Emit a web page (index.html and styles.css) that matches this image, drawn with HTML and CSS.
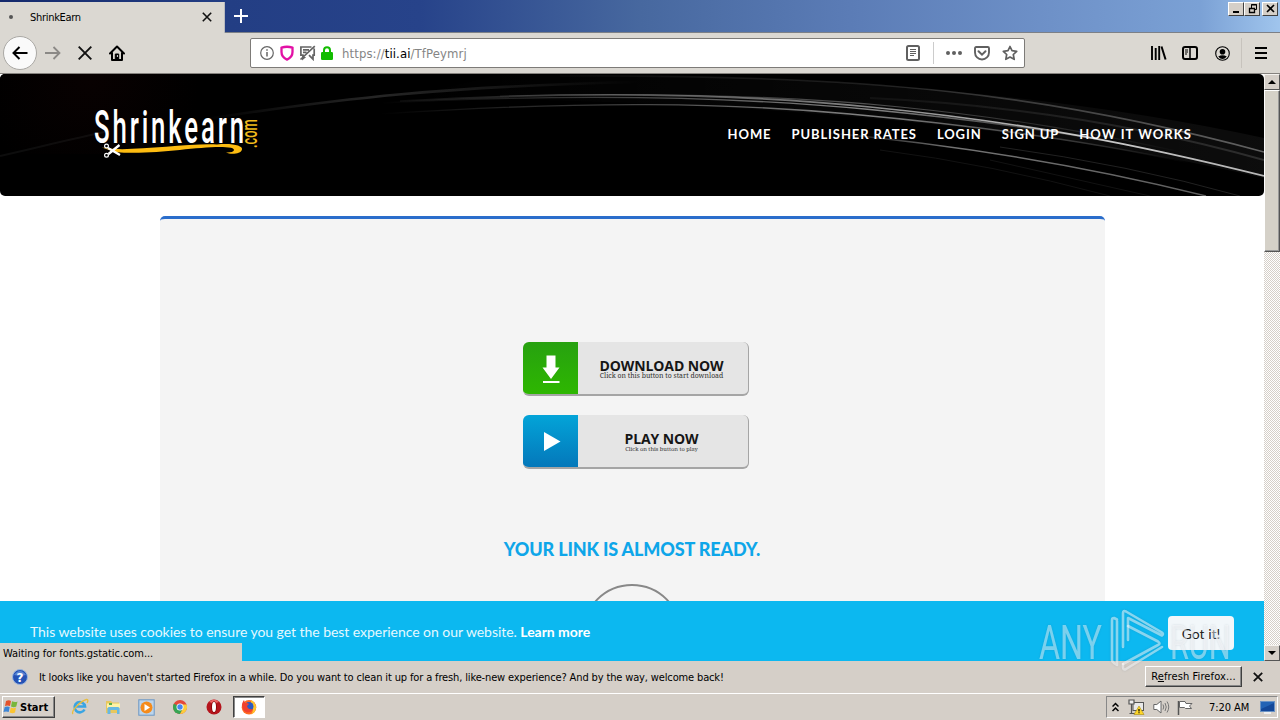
FILE: index.html
```html
<!DOCTYPE html>
<html lang="en">
<head>
<meta charset="utf-8">
<title>ShrinkEarn</title>
<link rel="stylesheet" href="styles.css">
</head>
<body>
<div class="desktop">
  <header class="tabbar">
    <div class="tab">
      <span class="tab-dot"></span>
      <span class="tab-title">ShrinkEarn</span>
      <svg class="tab-close" width="10" height="10" viewBox="0 0 10 10"><path d="M.8.8l8.4 8.4M9.2.8L.8 9.2" stroke="#111" stroke-width="1.6"/></svg>
    </div>
    <svg class="tab-new" width="14" height="14" viewBox="0 0 14 14"><path d="M7 0v14M0 7h14" stroke="#fff" stroke-width="2"/></svg>
    <div class="win-buttons">
      <span class="win-btn"><svg width="16" height="12" viewBox="0 0 16 12"><path d="M4 9h6" stroke="#000" stroke-width="2"/></svg></span>
      <span class="win-btn"><svg width="16" height="12" viewBox="0 0 16 12"><path d="M6.500 5V1.500h5v5H9M6 2h6" fill="none" stroke="#000"/><path d="M4.500 5.500h5v4h-5zM4 5.500h6" fill="none" stroke="#000" stroke-width="1.300"/></svg></span>
      <span class="win-btn win-x"><svg width="16" height="12" viewBox="0 0 16 12"><path d="M4 2l7 7M11 2L4 9" stroke="#000" stroke-width="1.600"/></svg></span>
    </div>
  </header>

  <div class="toolbar">
    <span class="back"><svg width="16" height="14" viewBox="0 0 16 14"><path d="M15.500 7H1.500M7.500 1L1.500 7l6 6" fill="none" stroke="#000" stroke-width="2"/></svg></span>
    <svg class="fwd" width="16" height="14" viewBox="0 0 16 14"><path d="M0 7h14.500M8.500 1l6 6-6 6" fill="none" stroke="#8b8986" stroke-width="1.800"/></svg>
    <svg class="stop" width="14" height="14" viewBox="0 0 14 14"><path d="M.7.7l12.600 12.600M13.300.7L.7 13.300" stroke="#111" stroke-width="1.900"/></svg>
    <svg class="home" width="16" height="16" viewBox="0 0 16 16"><path d="M1 8.500L8 1.500l7 7M3 8v7h10V8" fill="none" stroke="#000" stroke-width="2" stroke-linejoin="round" stroke-linecap="round"/><path d="M6.300 14V9h3.400v5" fill="#000" stroke="#000"/><path d="M8.400 10v2" stroke="#ddd"/></svg>
    <div class="urlbar">
      <svg class="i-info" width="14" height="14" viewBox="0 0 14 14"><circle cx="7" cy="7" r="6.300" fill="none" stroke="#666" stroke-width="1.200"/><path d="M7 6v4.500M7 3.200v1.600" stroke="#666" stroke-width="1.500"/></svg>
      <svg class="i-shield" width="14" height="16" viewBox="0 0 14 16"><path d="M1.500 2.700Q7 .8 12.500 2.700V7c0 3.700-1.800 6-5.500 7.600C3.300 13 1.500 10.700 1.500 7z" fill="none" stroke="#e210a5" stroke-width="2.300"/></svg>
      <svg class="i-chat" width="17" height="16" viewBox="0 0 17 16"><path d="M12.500 2H1.900v8.200h2v3.500l2.500-2.200M15.200 3.500v6.700H14v4l-4-4M4 4.800h6M4 7.300h3.500M1.500 14.500L15.800 1.200" fill="none" stroke="#646464" stroke-width="1.700"/></svg>
      <svg class="i-lock" width="12" height="14" viewBox="0 0 12 14"><path d="M3 7V4.200a3 3 0 0 1 6 0V7" fill="none" stroke="#12bc00" stroke-width="2"/><rect y="6" width="12" height="8" rx="1.200" fill="#12bc00"/></svg>
      <span class="url">https://<b>tii.ai</b>/TfPeymrj</span>
      <svg class="i-reader" width="14" height="16" viewBox="0 0 14 16"><rect x="1" y="1" width="12" height="14" rx="1.500" fill="none" stroke="#606060" stroke-width="2"/><path d="M4 4.500h6M4 6.500h6M4 8.500h6M4 10.500h4" stroke="#606060"/></svg>
      <span class="url-sep"></span>
      <svg class="i-dots" width="16" height="4" viewBox="0 0 16 4"><g fill="#606060"><circle cx="2" cy="2" r="2"/><circle cx="8" cy="2" r="2"/><circle cx="14" cy="2" r="2"/></g></svg>
      <svg class="i-pocket" width="16" height="15" viewBox="0 0 16 15"><path d="M2.200 1h11.600q1.200 0 1.200 1.200V6.500a7 7 0 0 1-14 0V2.200Q1 1 2.200 1z" fill="none" stroke="#606060" stroke-width="1.900"/><path d="M4.500 5.300L8 8.700l3.500-3.400" fill="none" stroke="#606060" stroke-width="2" stroke-linecap="round"/></svg>
      <svg class="i-star" width="16" height="16" viewBox="0 0 16 16"><path d="M8 1.500l2 4.200 4.700.6-3.400 3.200.9 4.800L8 12l-4.200 2.300.9-4.800L1.300 6.300 6 5.700z" fill="none" stroke="#606060" stroke-width="1.700" stroke-linejoin="round"/></svg>
    </div>
    <svg class="i-lib" width="16" height="14" viewBox="0 0 16 14"><path d="M1 0v14M4.700 2v12M8.200 0v14" stroke="#000" stroke-width="1.900"/><path d="M10.500.5L14.600 13.500" stroke="#000" stroke-width="2"/></svg>
    <svg class="i-side" width="16" height="14" viewBox="0 0 16 14"><rect x="1" y="1" width="14" height="12" rx="2" fill="none" stroke="#000" stroke-width="2"/><path d="M8 1v12" stroke="#000" stroke-width="1.500"/><path d="M3 4h3M3 6h3M3 8h2" stroke="#000"/></svg>
    <svg class="i-acct" width="15" height="15" viewBox="0 0 15 15"><circle cx="7.500" cy="7.500" r="6.800" fill="none" stroke="#000" stroke-width="1.100"/><circle cx="7.500" cy="5.800" r="2.800"/><path d="M3.200 10.500q4.300-2.500 8.600 0-4.300 5-8.600 0z"/></svg>
    <span class="menu-sep"></span>
    <svg class="i-menu" width="12" height="12" viewBox="0 0 12 12"><path d="M0 1h12M0 6h12M0 11h12" stroke="#000" stroke-width="1.800"/></svg>
  </div>

  <main class="viewport">
    <div class="page">
      <div class="hero">
        <svg class="hero-bg" width="1264" height="122" viewBox="0 0 1264 122" fill="none">
          <defs>
            <linearGradient id="fade" gradientUnits="userSpaceOnUse" x1="350" y1="0" x2="1264" y2="0"><stop offset="0" stop-color="#fff" stop-opacity="0"/><stop offset=".4" stop-color="#fff" stop-opacity=".35"/><stop offset=".8" stop-color="#fff" stop-opacity=".75"/><stop offset="1" stop-color="#fff" stop-opacity=".7"/></linearGradient>
            <linearGradient id="mid" gradientUnits="userSpaceOnUse" x1="380" y1="0" x2="1190" y2="0"><stop offset="0" stop-color="#fff" stop-opacity="0"/><stop offset=".6" stop-color="#fff" stop-opacity=".5"/><stop offset="1" stop-color="#fff" stop-opacity="0"/></linearGradient>
            <linearGradient id="soft" gradientUnits="userSpaceOnUse" x1="500" y1="0" x2="1264" y2="0"><stop offset="0" stop-color="#fff" stop-opacity="0"/><stop offset=".5" stop-color="#fff" stop-opacity=".12"/><stop offset="1" stop-color="#fff" stop-opacity=".35"/></linearGradient>
            <linearGradient id="haze" gradientUnits="userSpaceOnUse" x1="400" y1="0" x2="1264" y2="0"><stop offset="0" stop-color="#fff" stop-opacity="0"/><stop offset="1" stop-color="#fff" stop-opacity=".05"/></linearGradient>
            <linearGradient id="left" gradientUnits="userSpaceOnUse" x1="200" y1="0" x2="640" y2="0"><stop offset="0" stop-color="#fff" stop-opacity="0"/><stop offset=".4" stop-color="#fff" stop-opacity=".15"/><stop offset="1" stop-color="#fff" stop-opacity="0"/></linearGradient>
            <linearGradient id="low" gradientUnits="userSpaceOnUse" x1="820" y1="0" x2="1264" y2="0"><stop offset="0" stop-color="#fff" stop-opacity="0"/><stop offset=".3" stop-color="#fff" stop-opacity=".45"/><stop offset="1" stop-color="#fff" stop-opacity=".35"/></linearGradient>
            <radialGradient id="warm" gradientUnits="userSpaceOnUse" cx="90" cy="5" r="110"><stop offset="0" stop-color="#080101"/><stop offset="1" stop-color="#000"/></radialGradient>
          </defs>
          <rect width="300" height="80" fill="url(#warm)"/>
          <path d="M0 82C40 73 70 65 110 57" stroke="#fff" stroke-opacity=".05" stroke-width="2"/>
          <path d="M200 46C340 24 450 12 640 8" stroke="url(#left)" stroke-width="2.500"/>
          <path d="M500 1Q950 -4 1264 64V104Q930 26 400 24z" fill="url(#haze)"/>
          <path d="M400 27C600 16 750 21 870 33C1030 49 1140 71 1264 102" stroke="url(#fade)" stroke-width="1.700"/>
          <path d="M380 29C600 18 750 24 870 35.500C1010 49 1100 64 1190 84" stroke="url(#mid)" stroke-width="1.400"/>
          <path d="M380 40C590 26 730 29 850 40C970 51 1080 65 1190 89" stroke="url(#mid)" stroke-width="1.400"/>
          <path d="M500 22C700 17 820 25 900 33C1010 44 1090 58 1190 80" stroke="url(#mid)" stroke-opacity=".6" stroke-width="1.200"/>
          <path d="M560 2C870 0 1050 20 1264 78" stroke="url(#soft)" stroke-width="1.600"/>
          <path d="M870 24Q1080 34 1264 86" stroke="url(#soft)" stroke-opacity=".4" stroke-width="2"/>
          <path d="M820 58C960 71 1090 93 1206 122" stroke="url(#low)" stroke-width="1.400"/>
          <path d="M1000 73Q1130 91 1240 122" stroke="#fff" stroke-opacity=".13"/>
          <path d="M880 76Q990 90 1110 122M990 86L1150 122" stroke="#fff" stroke-opacity=".07"/>
        </svg>
        <svg class="logo" width="170" height="56" viewBox="0 0 170 56">
          <text class="logo-main" transform="translate(1 37) scale(.56 1)" textLength="268" lengthAdjust="spacing">Shrinkearn</text>
          <text class="logo-com" transform="translate(163.500 42) rotate(-90) scale(.6 1)" textLength="48" lengthAdjust="spacingAndGlyphs">.com</text>
          <path d="M6 40.500C26 48 90 37 124 38.500 140 37 150 40 149 43.500 148 48 138 49 133 46.500 142 47 143 43 138 41.800 115 38 62 50 22 46z" fill="#fdbc11"/>
          <g fill="none" stroke="#fff"><circle cx="13.500" cy="40" r="1.900" stroke-width="1.200"/><circle cx="13.500" cy="49.300" r="1.900" stroke-width="1.200"/><path d="M15 42l12 7M15.500 48L26.500 39" stroke-width="2.300"/></g>
        </svg>
        <nav class="nav"><a>HOME</a><a>PUBLISHER RATES</a><a>LOGIN</a><a>SIGN UP</a><a class="nav-how">HOW IT WORKS</a></nav>
      </div>
      <section class="box">
        <div class="ad">
          <span class="ad-icon ad-green"><svg width="54" height="52" viewBox="0 0 54 52"><path d="M23.500 13.500h9v12h4L28 37 19.500 25.500h4zM20 39h16.500v2H20z" fill="#fff"/></svg></span>
          <span class="ad-text"><span class="ad-head">DOWNLOAD NOW</span><span class="ad-sub">Click on this button to start download</span></span>
        </div>
        <div class="ad">
          <span class="ad-icon ad-blue"><svg width="54" height="52" viewBox="0 0 54 52"><path d="M21 17l16.500 9.500L21 36z" fill="#fff"/></svg></span>
          <span class="ad-text"><span class="ad-head ad-head-play">PLAY NOW</span><span class="ad-sub ad-sub-play">Click on this button to play</span></span>
        </div>
        <h1 class="ready">YOUR LINK IS ALMOST READY.</h1>
        <div class="ring"></div>
      </section>
      <div class="cookie">
        <p class="cookie-text">This website uses cookies to ensure you get the best experience on our website. <b>Learn more</b></p>
        <span class="got">Got it!</span>
      </div>
      <div class="status">Waiting for fonts.gstatic.com...</div>
    </div>
    <div class="scroll">
      <span class="sbtn"><svg width="8" height="4" viewBox="0 0 8 4"><path d="M0 4l4-4 4 4z"/></svg></span>
      <span class="thumb"></span>
      <span class="sbtn sbtn-down"><svg width="8" height="4" viewBox="0 0 8 4"><path d="M0 0l4 4 4-4z"/></svg></span>
    </div>
  </main>

  <div class="notice">
    <svg class="q" width="16" height="16" viewBox="0 0 16 16"><circle cx="8" cy="8" r="7.500" fill="#2552b5" stroke="#9bb5dd"/><path d="M2 6Q8-2 14 6 8 7 2 6z" fill="#7da5e4" opacity=".6"/><text x="8" y="12.500" text-anchor="middle" class="q-text">?</text></svg>
    <span class="notice-text">It looks like you haven't started Firefox in a while. Do you want to clean it up for a fresh, like-new experience? And by the way, welcome back!</span>
    <span class="refresh"><span class="refresh-text">R<u>e</u>fresh Firefox...</span></span>
    <svg class="notice-x" width="10" height="10" viewBox="0 0 10 10"><path d="M.8.8l8.400 8.400M9.200.8L.8 9.200" stroke="#111" stroke-width="1.800"/></svg>
  </div>

  <footer class="taskbar">
    <div class="start">
      <svg width="16" height="16" viewBox="0 0 16 16"><path d="M3 2q3-1.500 5 0L7 7Q4.500 6 2 7z" fill="#e5532c"/><path d="M9 2.300q3 1.400 5.500.2L13.300 7.500Q11 9 8 7.500z" fill="#79b63c"/><path d="M1.700 8q2.500-1 5 0l-1 5Q3 12 .5 13z" fill="#3e86d6"/><path d="M7.800 8.500q2.500 1.500 5.200 0L12 13.500q-2.500 1.500-5.300 0z" fill="#fbc431"/></svg>
      <span class="start-text">Start</span>
    </div>
    <svg class="t-ie" width="18" height="18" viewBox="0 0 18 18"><path d="M13.500 11.500A5.200 5.200 0 1 1 14 8.500H5" fill="none" stroke="#3aa5e3" stroke-width="2.600"/><path d="M2 16C-1 13 10 3 15.500 1.500c2-.4 1.500 2 .5 3.500" fill="none" stroke="#e9bd3c" stroke-width="1.300"/></svg>
    <svg class="t-exp" width="17" height="17" viewBox="0 0 17 17"><path d="M1 2h5l1.500 1.500H14V14H1z" fill="#e8c75d"/><path d="M2 4.500h13V9H2z" fill="#fff2a7"/><path d="M2.500 15V9.500q0-1.500 1.500-1.500h9q1.500 0 1.500 1.500V15H12v-4H5.500v4z" fill="#67b8e3"/><path d="M4 5h3" stroke="#5ab04b" stroke-width="2"/></svg>
    <svg class="t-wmp" width="17" height="17" viewBox="0 0 17 17"><rect x=".8" y=".8" width="15.400" height="15.400" fill="#bcd5ec" stroke="#6b97c4"/><circle cx="8.500" cy="8.500" r="6" fill="#f58b1b"/><path d="M6.500 5l5.500 3.500L6.500 12z" fill="#fff"/></svg>
    <svg class="t-chr" width="16" height="16" viewBox="0 0 16 16"><circle cx="8" cy="8" r="7" fill="#e3493b"/><path d="M1.800 4.800A7 7 0 0 0 8 15l3.300-6z" fill="#36a554"/><path d="M8 15a7 7 0 0 0 6.600-9.500H8l3 4z" fill="#fccd3c"/><circle cx="8" cy="8" r="3.500" fill="#fff"/><circle cx="8" cy="8" r="2.700" fill="#4587ef"/></svg>
    <svg class="t-op" width="16" height="16" viewBox="0 0 16 16"><circle cx="8" cy="8" r="7.500" fill="#b5141c"/><path d="M3 3Q8-2 13 3 8 5 3 3z" fill="#e66"/><ellipse cx="8" cy="8" rx="2.700" ry="5.800" fill="#700"/><ellipse cx="8" cy="8" rx="2" ry="5" fill="#fff"/></svg>
    <span class="t-ffx"><svg width="16" height="16" viewBox="0 0 16 16"><circle cx="8" cy="8.300" r="7.300" fill="#ff6a22"/><path d="M10 1q5.500 3 5 8.500Q14 14 10 15.500 14 10 10 6z" fill="#ffc52e"/><circle cx="8" cy="7.500" r="4.500" fill="#2c5bc4"/><path d="M1 5Q2 2 3 1l1 3q3-.3 4 1L6 7q1 4 6 3-2 4-6 3.500Q1 12 1 5z" fill="#f0412f"/></svg></span>
    <div class="tray">
      <svg class="y-up" width="7" height="10" viewBox="0 0 7 10"><path d="M.5 4.500l3-3 3 3M.5 9l3-3 3 3" fill="none" stroke="#000" stroke-width="1.500"/></svg>
      <svg class="y-net" width="17" height="16" viewBox="0 0 17 16"><rect x="5" y="3.500" width="10.500" height="8" fill="#e9e9e9" stroke="#555"/><path d="M1 1h5v4H1zM3.500 5v9M1.500 14.500h6" fill="#eee" stroke="#555" stroke-width="1.200"/><path d="M11 7l5 8.500H6z" fill="#ffd728" stroke="#a68a10" stroke-width=".6"/><path d="M11 10v2.500M11 13.300v1" stroke="#000" stroke-width="1.200"/></svg>
      <svg class="y-vol" width="17" height="14" viewBox="0 0 17 14"><path d="M.8 4.500h3L8 1v12L3.800 9.500h-3z" fill="#fff" stroke="#666"/><path d="M10 4.500q1.500 2.500 0 5M12 3q2.500 4 0 8M14 1.500q3.500 5.500 0 11" fill="none" stroke="#777"/></svg>
      <svg class="y-flag" width="16" height="15" viewBox="0 0 16 15"><path d="M1.500 1v14" stroke="#555" stroke-width="1.500"/><path d="M2.500 1.500H8L9 3.500h6L12.500 6l2 2.500H8.500L7.500 7.500h-5z" fill="#fff" stroke="#666"/></svg>
      <span class="clock">7:20 AM</span>
      <svg class="y-desk" width="15" height="13" viewBox="0 0 15 13"><rect x=".5" y=".5" width="14" height="10" fill="#2363b5" stroke="#6b93c5"/><path d="M1 8L14 2v8H1z" fill="#144899"/><path d="M4 12h7" stroke="#eee" stroke-width="2"/></svg>
    </div>
  </footer>

  <svg class="watermark" width="200" height="66" viewBox="0 0 200 66">
    <g class="wm-text"><text transform="translate(2 51.500) scale(.56 1)" textLength="112" lengthAdjust="spacingAndGlyphs">ANY</text><text transform="translate(133 51.500) scale(.56 1)" textLength="108" lengthAdjust="spacingAndGlyphs">RUN</text></g>
    <g fill="none" stroke="#fff" stroke-opacity=".5" stroke-width="2.600" stroke-linejoin="round" stroke-linecap="round"><path d="M80 12.500l-3-1.500q-2 0-2 2v40q0 2 2 3l3 2V14"/><path d="M86 40V6q0-3 3-1.500l36 21q2 1.500 0 3L91 11v22"/><path d="M91 19l30 15.500q3 2 0 3.500L86 57"/><path d="M125 40L89 62q-3 1.500-3-2v-3"/></g>
  </svg>
</div>
</body>
</html>
```
FILE: styles.css
```css
* { box-sizing: border-box; }
body { margin: 0; background: #d5cfc8; }
svg { display: block; flex: none; }
.desktop { width: 1280px; height: 720px; overflow: hidden; position: relative; display: flex; flex-direction: column; font: 11px "DejaVu Sans Condensed", "DejaVu Sans", sans-serif; font-stretch: condensed; letter-spacing: -.14px; color: #000; white-space: nowrap; }

.tabbar { height: 33px; flex: none; display: flex; background: linear-gradient(90deg, #14296c 0, #233e84 230px, #27438a 420px, #47689f 640px, #5b7cb6 850px, #6e91c8 1050px, #7ba1d5 1200px, #a0c5ed 1280px); border-bottom: 1px solid #7c8087; }
.tab { width: 225px; height: 32px; margin-top: 2px; padding: 0 12px 0 9px; display: flex; align-items: center; background: #dbd8d2; border-right: 1px solid #b8bac0; }
.tab-dot { width: 4px; height: 4px; border-radius: 2px; background: #555; margin-bottom: 2px; }
.tab-title { flex: 1; margin-left: 17px; padding-bottom: 2px; letter-spacing: -.3px; }
.tab-close { margin-bottom: 2px; }
.tab-new { margin: 9px 0 0 9px; }
.win-buttons { margin: 2px 2px 0 auto; display: flex; }
.win-btn { width: 16px; height: 14px; background: #d5cfc8; border: 1px solid; border-color: #fff #404040 #404040 #fff; overflow: hidden; }
.win-x { margin-left: 2px; }

.toolbar { height: 41px; flex: none; display: flex; align-items: center; background: #dbd8d2; border-bottom: 1px solid #85827e; padding-left: 3px; }
.back { width: 34px; height: 34px; border-radius: 50%; border: 1px solid #aaa8a4; background: #fafafa; display: flex; align-items: center; justify-content: center; }
.fwd { margin-left: 8px; }
.stop { margin-left: 17px; }
.home { margin-left: 17px; }
.urlbar { width: 775px; height: 30px; margin-left: 125px; background: #fff; border: 1px solid #7d7b78; border-radius: 2px; display: flex; align-items: center; padding-left: 9px; }
.i-shield { margin-left: 6px; }
.i-chat { margin-left: 5px; }
.i-lock { margin-left: 5px; }
.url { width: 400px; margin-left: 9px; font-size: 13px; color: #858585; letter-spacing: .1px; padding-top: 1px; }
.url b { font-weight: 400; color: #000; }
.i-reader { margin-left: 164px; }
.url-sep { width: 1px; height: 22px; margin: 0 12px 0 13px; background: #ccc; }
.i-pocket { margin-left: 12px; }
.i-star { margin-left: 12px; }
.i-lib { margin-left: 126px; }
.i-side { margin-left: 15px; }
.i-acct { margin-left: 17px; }
.menu-sep { width: 1px; height: 30px; margin: 0 13px 0 11px; background: #c7c3bd; }

.viewport { height: 587px; flex: none; display: flex; background: #fff; }
.page { width: 1264px; position: relative; overflow: hidden; letter-spacing: 0; }
.hero { height: 122px; background: #000; border-radius: 5px; position: relative; display: flex; padding: 32px 72px 0 93px; overflow: hidden; }
.hero-bg { position: absolute; left: 0; top: 0; }
.logo { position: relative; overflow: visible; }
.logo-main { font: 500 46px "Roboto", sans-serif; fill: #fff; }
.logo-com { font: 500 22px "Roboto", sans-serif; fill: #f1b91c; }
.nav { position: relative; margin-left: auto; height: 56px; display: flex; align-items: center; gap: 20px; font: 700 13px Lato, sans-serif; letter-spacing: .9px; color: #fff; }
.nav-how { letter-spacing: 1.080px; }
.box { width: 945px; height: 500px; margin: 20px 0 0 160px; background: #f4f4f4; border-top: 3px solid #2a6dcb; border-radius: 5px 5px 0 0; display: flex; flex-direction: column; align-items: center; padding: 123px 0 0 6px; }
.ad { width: 226px; height: 54px; flex: none; margin-bottom: 19px; display: flex; background: #e5e5e5; border-radius: 6px; overflow: hidden; border: solid #a5a5a5; border-width: 0 1px 2px 0; }
.ad-icon { width: 55px; height: 54px; flex: none; }
.ad-green { background: linear-gradient(#27a110, #2eb800); }
.ad-blue { background: linear-gradient(#03a4d8, #0476b9); }
.ad-text { flex: 1; display: flex; flex-direction: column; align-items: center; padding: 17px 2px 0 0; color: #161616; }
.ad-head { font: 700 14px/13px "Open Sans", sans-serif; letter-spacing: -.1px; }
.ad-sub { font: 6.900px/8px "Noto Serif", "DejaVu Serif", serif; color: #333; }
.ad-sub-play { font-size: 5.700px; line-height: 8px; }
.ready { margin: 49px 7px 0 0; font: 900 18px/24px Lato, sans-serif; color: #0ea6e9; letter-spacing: -.15px; }
.ring { width: 100px; height: 100px; flex: none; margin: 23px 8px 0 0; border: 2px solid #888; border-radius: 50%; }
.cookie { position: absolute; left: 0; top: 527px; width: 1264px; height: 60px; background: #0cb8f0; display: flex; justify-content: space-between; padding: 15px 30px 0; color: #e5f9ff; font: 14px Lato, sans-serif; }
.cookie-text { margin: 7px 0 0; letter-spacing: -.045px; }
.cookie-text b { color: #fff; }
.got { width: 66px; height: 34px; border-radius: 4px; background: #f2f7fa; color: #222; display: flex; align-items: center; justify-content: center; }
.status { position: absolute; left: 0; top: 569px; width: 242px; height: 18px; background: #d4d0c8; padding: 4px 0 0 3px; line-height: 14px; letter-spacing: -.06px; }
.scroll { width: 16px; display: flex; flex-direction: column; background: repeating-conic-gradient(#fff 0 25%, #d5cfc8 0 50%) 0 0/2px 2px; }
.sbtn { height: 16px; background: #d5cfc8; border: 1px solid; border-color: #f5f3ef #555 #555 #f5f3ef; display: flex; align-items: center; justify-content: center; }
.thumb { height: 162px; background: #d5d1c8; border: 1px solid; border-color: #fff #555 #555 #fff; box-shadow: inset -1px -1px #999; }
.sbtn-down { margin-top: auto; }

.notice { height: 32px; flex: none; display: flex; align-items: center; background: #d5cfc8; padding-left: 12px; }
.q-text { font: 700 12px "DejaVu Sans", sans-serif; fill: #fff; }
.notice-text { width: 1100px; margin-left: 11px; }
.refresh { width: 97px; height: 21px; margin: -2px 0 0 6px; letter-spacing: .1px; border: 1px solid; border-color: #fff #404040 #404040 #fff; box-shadow: inset -1px -1px #888; display: flex; align-items: center; justify-content: center; }
.notice-x { margin-left: 11px; }

.taskbar { height: 27px; flex: none; border-top: 1px solid #fff; display: flex; align-items: center; padding: 0 2px; }
.start { width: 53px; height: 22px; border: 1px solid; border-color: #fff #404040 #404040 #fff; box-shadow: inset -1px -1px #888; display: flex; align-items: center; gap: 1px; }
.start-text { font-weight: 700; letter-spacing: 0; }
.t-ie { margin-left: 16px; }
.t-exp { margin-left: 16px; }
.t-wmp { margin-left: 16px; }
.t-chr { margin-left: 17px; }
.t-op { margin-left: 18px; }
.t-ffx { width: 32px; height: 22px; margin-left: 11px; background: #fff; border: 1px solid; border-color: #404040 #fff #fff #404040; box-shadow: inset 1px 1px #888; display: flex; align-items: center; justify-content: center; }
.tray { width: 172px; height: 22px; margin-left: auto; border: 1px solid; border-color: #888 #fff #fff #888; display: flex; align-items: center; padding-left: 5px; }
.y-net { margin-left: 9px; }
.y-vol { margin-left: 8px; }
.y-flag { margin-left: 7px; }
.clock { width: 42px; margin-left: 16px; letter-spacing: -.05px; }
.y-desk { margin-left: 9px; }

.watermark { position: absolute; left: 1037px; top: 607px; filter: drop-shadow(0 0 1px rgba(60, 80, 100, .35)); }
.wm-text { font: 48px "Roboto", sans-serif; fill: #fff; fill-opacity: .45; }
```
